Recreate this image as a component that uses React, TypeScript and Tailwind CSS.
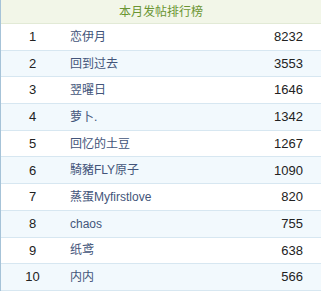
const rows = [
  { rank: 1, name: '恋伊月', posts: 8232 },
  { rank: 2, name: '回到过去', posts: 3553 },
  { rank: 3, name: '翌曜日', posts: 1646 },
  { rank: 4, name: '萝卜.', posts: 1342 },
  { rank: 5, name: '回忆的土豆', posts: 1267 },
  { rank: 6, name: '騎豬FLY原子', posts: 1090 },
  { rank: 7, name: '蒸蛋Myfirstlove', posts: 820 },
  { rank: 8, name: 'chaos', posts: 755 },
  { rank: 9, name: '纸鸢', posts: 638 },
  { rank: 10, name: '内内', posts: 566 },
];

export default function App() {
  return (
    <div className="w-[324px] h-[292px] bg-white overflow-hidden">
      <div className="w-[321px] border-l border-[#a6c3d8] font-['Liberation_Sans','Noto_Sans_CJK_SC',sans-serif]">
        {/* header */}
        <div className="h-[24px] flex items-center justify-center bg-[#f2f6e8] border-b border-[#e2ead6] text-[12px] text-[#6a9532]">
          本月发帖排行榜
        </div>

        {rows.map((r, i) => (
          <div
            key={r.rank}
            className={`h-[26.7px] grid grid-cols-[63px_1fr_auto] items-center border-b border-[#d7e7f1] ${
              i % 2 === 1 ? 'bg-[#f2f9fd]' : 'bg-white'
            }`}
          >
            <div className="text-center text-[13px] text-[#222]">{r.rank}</div>
            <div className="pl-[6px] text-[12px] text-[#43557a] truncate">{r.name}</div>
            <div className="pr-[18px] text-[13px] text-[#222] text-right">{r.posts}</div>
          </div>
        ))}
      </div>
    </div>
  );
}
